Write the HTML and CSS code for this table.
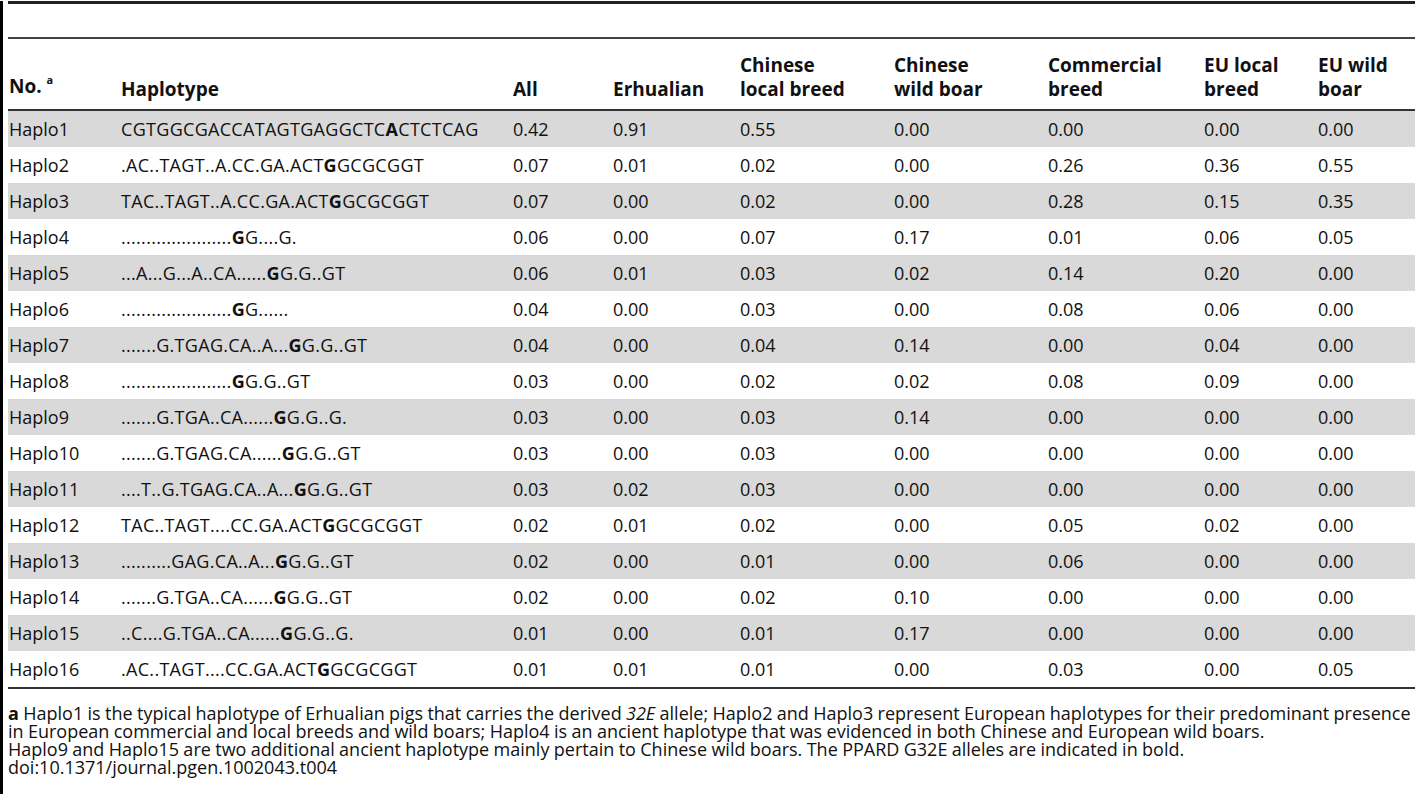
FILE: index.html
```html
<!DOCTYPE html>
<html lang="en">
<head>
<meta charset="utf-8">
<title>Haplotype frequencies</title>
<link rel="stylesheet" href="styles.css">
</head>
<body>
<div class="frame">
  <div class="topbar"></div>
  <table class="tbl">
    <colgroup>
      <col class="c-no"><col class="c-hap"><col class="c-all"><col class="c-erh"><col class="c-clb"><col class="c-cwb"><col class="c-com"><col class="c-elb"><col class="c-ewb">
    </colgroup>
    <thead>
      <tr>
        <th>No. <sup>a</sup></th>
        <th>Haplotype</th>
        <th>All</th>
        <th>Erhualian</th>
        <th>Chinese<br>local breed</th>
        <th>Chinese<br>wild boar</th>
        <th>Commercial<br>breed</th>
        <th>EU local<br>breed</th>
        <th>EU wild<br>boar</th>
      </tr>
    </thead>
    <tbody>
      <tr><td>Haplo1</td><td class="seq">CGTGGCGACCATAGTGAGGCTC<b>A</b>CTCTCAG</td><td>0.42</td><td>0.91</td><td>0.55</td><td>0.00</td><td>0.00</td><td>0.00</td><td>0.00</td></tr>
      <tr><td>Haplo2</td><td class="seq">.AC..TAGT..A.CC.GA.ACT<b>G</b>GCGCGGT</td><td>0.07</td><td>0.01</td><td>0.02</td><td>0.00</td><td>0.26</td><td>0.36</td><td>0.55</td></tr>
      <tr><td>Haplo3</td><td class="seq">TAC..TAGT..A.CC.GA.ACT<b>G</b>GCGCGGT</td><td>0.07</td><td>0.00</td><td>0.02</td><td>0.00</td><td>0.28</td><td>0.15</td><td>0.35</td></tr>
      <tr><td>Haplo4</td><td class="seq">......................<b>G</b>G....G.</td><td>0.06</td><td>0.00</td><td>0.07</td><td>0.17</td><td>0.01</td><td>0.06</td><td>0.05</td></tr>
      <tr><td>Haplo5</td><td class="seq">...A...G...A..CA......<b>G</b>G.G..GT</td><td>0.06</td><td>0.01</td><td>0.03</td><td>0.02</td><td>0.14</td><td>0.20</td><td>0.00</td></tr>
      <tr><td>Haplo6</td><td class="seq">......................<b>G</b>G......</td><td>0.04</td><td>0.00</td><td>0.03</td><td>0.00</td><td>0.08</td><td>0.06</td><td>0.00</td></tr>
      <tr><td>Haplo7</td><td class="seq">.......G.TGAG.CA..A...<b>G</b>G.G..GT</td><td>0.04</td><td>0.00</td><td>0.04</td><td>0.14</td><td>0.00</td><td>0.04</td><td>0.00</td></tr>
      <tr><td>Haplo8</td><td class="seq">......................<b>G</b>G.G..GT</td><td>0.03</td><td>0.00</td><td>0.02</td><td>0.02</td><td>0.08</td><td>0.09</td><td>0.00</td></tr>
      <tr><td>Haplo9</td><td class="seq">.......G.TGA..CA......<b>G</b>G.G..G.</td><td>0.03</td><td>0.00</td><td>0.03</td><td>0.14</td><td>0.00</td><td>0.00</td><td>0.00</td></tr>
      <tr><td>Haplo10</td><td class="seq">.......G.TGAG.CA......<b>G</b>G.G..GT</td><td>0.03</td><td>0.00</td><td>0.03</td><td>0.00</td><td>0.00</td><td>0.00</td><td>0.00</td></tr>
      <tr><td>Haplo11</td><td class="seq">....T..G.TGAG.CA..A...<b>G</b>G.G..GT</td><td>0.03</td><td>0.02</td><td>0.03</td><td>0.00</td><td>0.00</td><td>0.00</td><td>0.00</td></tr>
      <tr><td>Haplo12</td><td class="seq">TAC..TAGT....CC.GA.ACT<b>G</b>GCGCGGT</td><td>0.02</td><td>0.01</td><td>0.02</td><td>0.00</td><td>0.05</td><td>0.02</td><td>0.00</td></tr>
      <tr><td>Haplo13</td><td class="seq">..........GAG.CA..A...<b>G</b>G.G..GT</td><td>0.02</td><td>0.00</td><td>0.01</td><td>0.00</td><td>0.06</td><td>0.00</td><td>0.00</td></tr>
      <tr><td>Haplo14</td><td class="seq">.......G.TGA..CA......<b>G</b>G.G..GT</td><td>0.02</td><td>0.00</td><td>0.02</td><td>0.10</td><td>0.00</td><td>0.00</td><td>0.00</td></tr>
      <tr><td>Haplo15</td><td class="seq">..C....G.TGA..CA......<b>G</b>G.G..G.</td><td>0.01</td><td>0.00</td><td>0.01</td><td>0.17</td><td>0.00</td><td>0.00</td><td>0.00</td></tr>
      <tr><td>Haplo16</td><td class="seq">.AC..TAGT....CC.GA.ACT<b>G</b>GCGCGGT</td><td>0.01</td><td>0.01</td><td>0.01</td><td>0.00</td><td>0.03</td><td>0.00</td><td>0.05</td></tr>
    </tbody>
  </table>
  <div class="notes">
    <p><b>a</b> Haplo1 is the typical haplotype of Erhualian pigs that carries the derived <i>32E</i> allele; Haplo2 and Haplo3 represent European haplotypes for their predominant presence in European commercial and local breeds and wild boars; Haplo4 is an ancient haplotype that was evidenced in both Chinese and European wild boars.<br>Haplo9 and Haplo15 are two additional ancient haplotype mainly pertain to Chinese wild boars. The PPARD G32E alleles are indicated in bold.</p>
    <p>doi:10.1371/journal.pgen.1002043.t004</p>
  </div>
</div>
</body>
</html>
```

FILE: styles.css
```css
html, body {
  margin: 0;
  padding: 0;
  background: #ffffff;
}
body {
  font-family: "Open Sans", "Liberation Sans", sans-serif;
  color: #111;
  overflow: hidden;
}
.frame {
  border-left: 3px solid #000;
  height: 793px;
  padding-left: 5px;
  box-sizing: border-box;
}
.topbar {
  height: 3px;
  background: #222;
  margin-top: 1px;
}
.tbl {
  margin-top: 33px;
  width: 1407px;
  border-collapse: collapse;
  table-layout: fixed;
  font-size: 18px;
}
.c-no { width: 112px; }
.c-hap { width: 392px; }
.c-all { width: 100px; }
.c-erh { width: 127px; }
.c-clb { width: 154px; }
.c-cwb { width: 154px; }
.c-com { width: 156px; }
.c-elb { width: 114px; }
.c-ewb { width: 98px; }
.tbl thead tr {
  border-top: 2px solid #444;
  border-bottom: 2px solid #333;
}
.tbl th {
  text-align: left;
  vertical-align: bottom;
  font-size: 19px;
  font-weight: 700;
  line-height: 24px;
  padding: 14px 0 8px 1px;
  white-space: nowrap;
}
.tbl th sup {
  font-size: 11px;
  vertical-align: 0;
  position: relative;
  top: -9px;
}
.tbl td {
  height: 36px;
  padding: 0 0 0 1px;
  line-height: 20px;
  vertical-align: middle;
  white-space: nowrap;
}
.tbl td.seq {
  letter-spacing: 0.3px;
}
.tbl tbody tr:nth-child(odd) td {
  background: #d9d9d9;
}
.tbl tbody tr:last-child {
  border-bottom: 2px solid #333;
}
.notes {
  margin-top: 15px;
  font-size: 18px;
  line-height: 18px;
  word-spacing: -0.3px;
}
.notes p {
  margin: 0;
}
```
